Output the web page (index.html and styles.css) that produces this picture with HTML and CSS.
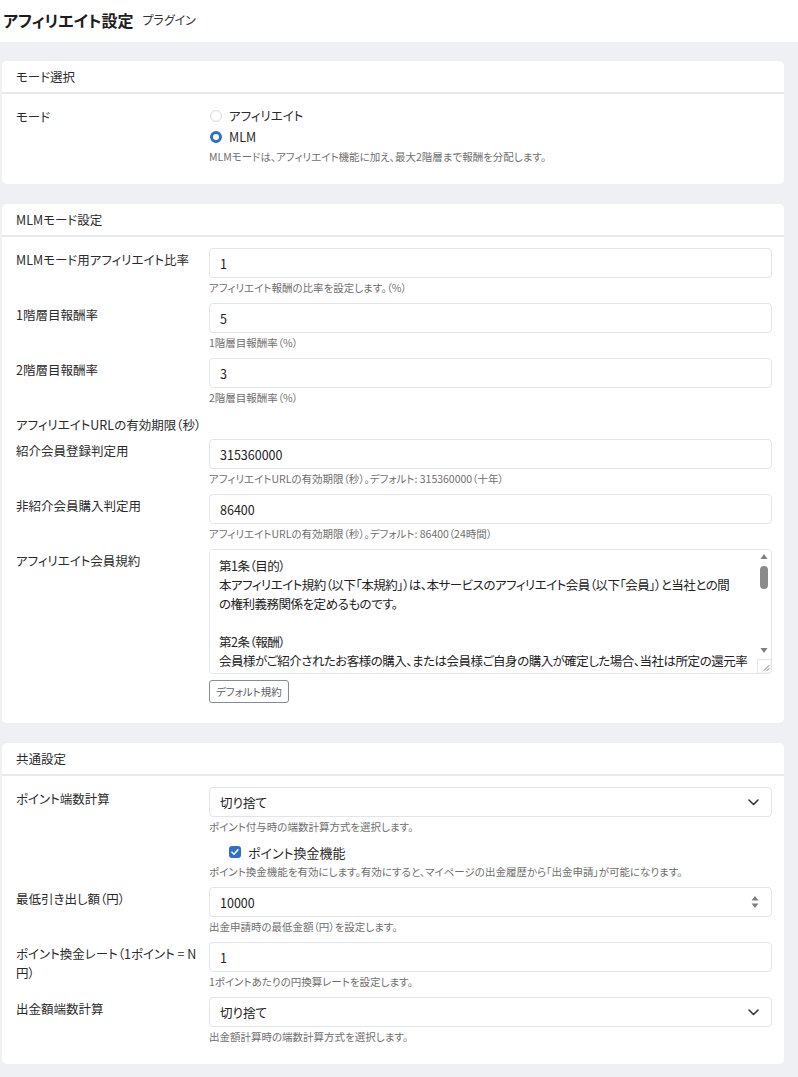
FILE: index.html
```html
<!DOCTYPE html>
<html lang="ja">
<head>
    <meta charset="UTF-8">
    <meta name="viewport" content="width=device-width, initial-scale=1.0">
    <title>アフィリエイト設定</title>
    <link rel="stylesheet" href="styles.css">
</head>
<body>
    <header class="page-header">
        <h1 class="page-title">アフィリエイト設定</h1>
        <span class="page-sub">プラグイン</span>
    </header>

    <main class="page-body">
        <section class="card">
            <div class="card-header">モード選択</div>
            <div class="card-body">
                <div class="form-row">
                    <label class="form-label">モード</label>
                    <div class="form-field">
                        <label class="radio"><input type="radio" name="mode" value="affiliate">アフィリエイト</label>
                        <label class="radio"><input type="radio" name="mode" value="mlm" checked>MLM</label>
                        <div class="help">MLMモードは、アフィリエイト機能に加え、最大2階層まで報酬を分配します。</div>
                    </div>
                </div>
            </div>
        </section>

        <section class="card">
            <div class="card-header">MLMモード設定</div>
            <div class="card-body">
                <div class="form-row">
                    <label class="form-label">MLMモード用アフィリエイト比率</label>
                    <div class="form-field">
                        <input type="text" class="input" value="1">
                        <div class="help">アフィリエイト報酬の比率を設定します。（%）</div>
                    </div>
                </div>
                <div class="form-row">
                    <label class="form-label">1階層目報酬率</label>
                    <div class="form-field">
                        <input type="text" class="input" value="5">
                        <div class="help">1階層目報酬率（%）</div>
                    </div>
                </div>
                <div class="form-row">
                    <label class="form-label">2階層目報酬率</label>
                    <div class="form-field">
                        <input type="text" class="input" value="3">
                        <div class="help">2階層目報酬率（%）</div>
                    </div>
                </div>
                <div class="form-row group-title">
                    <label class="form-label">アフィリエイトURLの有効期限（秒）</label>
                </div>
                <div class="form-row">
                    <label class="form-label">紹介会員登録判定用</label>
                    <div class="form-field">
                        <input type="text" class="input" value="315360000">
                        <div class="help">アフィリエイトURLの有効期限（秒）。デフォルト: 315360000（十年）</div>
                    </div>
                </div>
                <div class="form-row">
                    <label class="form-label">非紹介会員購入判定用</label>
                    <div class="form-field">
                        <input type="text" class="input" value="86400">
                        <div class="help">アフィリエイトURLの有効期限（秒）。デフォルト: 86400（24時間）</div>
                    </div>
                </div>
                <div class="form-row">
                    <label class="form-label">アフィリエイト会員規約</label>
                    <div class="form-field">
                        <div class="terms-wrap">
                            <textarea class="terms">第1条（目的）
本アフィリエイト規約（以下「本規約」）は、本サービスのアフィリエイト会員（以下「会員」）と当社との間
の権利義務関係を定めるものです。

第2条（報酬）
会員様がご紹介されたお客様の購入、または会員様ご自身の購入が確定した場合、当社は所定の還元率
に基づきポイントを付与いたします。

第3条（ポイントの換金）
会員は、当社が定める最低引き出し額以上のポイントを保有している場合、マイページより出金申請を行うことができます。

第4条（禁止事項）
会員は、虚偽の情報による登録、自己購入を目的とした不正な紹介、その他当社が不適切と判断する行為を行ってはなりません。

第5条（資格の取消）
会員が本規約に違反した場合、当社は事前の通知なく会員資格を取り消し、付与済みのポイントを失効させることができます。

第6条（規約の変更）
当社は、必要に応じて本規約を変更できるものとし、変更後の規約は本サービス上に掲示した時点から効力を生じます。</textarea>
                            <svg class="terms-scroll" width="14" height="123" viewBox="0 0 14 123">
                                <path d="M7 4l3.5 5h-7z" fill="#7f7f7f"/>
                                <rect x="3" y="16" width="8" height="23" rx="4" fill="#8b8b8b"/>
                                <path d="M3.5 98h7L7 103z" fill="#7f7f7f"/>
                                <rect x="0.5" y="109.5" width="13.5" height="13.5" fill="#fff" stroke="#e6e6e6"/>
                                <path d="M12 115.5l-5 5M12 118.5l-2 2" stroke="#6f6f6f" stroke-width="1" stroke-linecap="round"/>
                            </svg>
                        </div>
                        <button type="button" class="btn-outline">デフォルト規約</button>
                    </div>
                </div>
            </div>
        </section>

        <section class="card">
            <div class="card-header">共通設定</div>
            <div class="card-body">
                <div class="form-row">
                    <label class="form-label">ポイント端数計算</label>
                    <div class="form-field">
                        <div class="select-wrap">
                            <select class="input select">
                                <option selected>切り捨て</option>
                                <option>切り上げ</option>
                                <option>四捨五入</option>
                            </select>
                            <svg class="select-arrow" width="11" height="7" viewBox="0 0 11 7"><path d="M1 1l4.5 4.5L10 1" fill="none" stroke="#343a40" stroke-width="1.6" stroke-linecap="round" stroke-linejoin="round"/></svg>
                        </div>
                        <div class="help">ポイント付与時の端数計算方式を選択します。</div>
                    </div>
                </div>
                <div class="form-row">
                    <div></div>
                    <div class="form-field">
                        <label class="check">
                            <input type="checkbox" checked>
                            <svg class="check-mark" width="12" height="12" viewBox="0 0 12 12"><path d="M3 6.2l2 2 4-4.4" fill="none" stroke="#fff" stroke-width="1.6" stroke-linecap="round" stroke-linejoin="round"/></svg>
                            ポイント換金機能
                        </label>
                        <div class="help">ポイント換金機能を有効にします。有効にすると、マイページの出金履歴から「出金申請」が可能になります。</div>
                    </div>
                </div>
                <div class="form-row">
                    <label class="form-label">最低引き出し額（円）</label>
                    <div class="form-field">
                        <div class="select-wrap">
                            <input type="number" class="input number" value="10000">
                            <svg class="spin" width="10" height="16" viewBox="0 0 10 16"><path d="M5 2L8.5 6.5h-7z" fill="#7d7d7d"/><path d="M5 14L8.5 9.5h-7z" fill="#7d7d7d"/></svg>
                        </div>
                        <div class="help">出金申請時の最低金額（円）を設定します。</div>
                    </div>
                </div>
                <div class="form-row">
                    <label class="form-label">ポイント換金レート（1ポイント = N円）</label>
                    <div class="form-field">
                        <input type="text" class="input" value="1">
                        <div class="help">1ポイントあたりの円換算レートを設定します。</div>
                    </div>
                </div>
                <div class="form-row">
                    <label class="form-label">出金額端数計算</label>
                    <div class="form-field">
                        <div class="select-wrap">
                            <select class="input select">
                                <option selected>切り捨て</option>
                                <option>切り上げ</option>
                                <option>四捨五入</option>
                            </select>
                            <svg class="select-arrow" width="11" height="7" viewBox="0 0 11 7"><path d="M1 1l4.5 4.5L10 1" fill="none" stroke="#343a40" stroke-width="1.6" stroke-linecap="round" stroke-linejoin="round"/></svg>
                        </div>
                        <div class="help">出金額計算時の端数計算方式を選択します。</div>
                    </div>
                </div>
            </div>
        </section>
    </main>
</body>
</html>
```

FILE: styles.css
```css
* {
    box-sizing: border-box;
}

body {
    margin: 0;
    background: #eef0f4;
    color: #2b2b2b;
    font-family: "Noto Sans CJK JP", sans-serif;
    font-feature-settings: "palt";
    font-size: 12.5px;
}

.page-header {
    display: flex;
    align-items: center;
    gap: 9px;
    height: 42px;
    padding: 0 3px 3px;
    background: #fff;
}

.page-title {
    margin: 0;
    font-size: 16px;
    font-weight: 700;
    color: #1d1d1d;
}

.page-sub {
    font-size: 12px;
    color: #333;
}

.page-body {
    padding: 19px 14px 11px 2px;
}

.card {
    margin-bottom: 20px;
    background: #fff;
    border-radius: 5px;
}

.card:last-child {
    margin-bottom: 0;
}

.card-header {
    height: 33px;
    padding: 0 14px;
    line-height: 31px;
    border-bottom: 2px solid #e8e9ec;
}

.card-body {
    padding: 11px 12px 12px 14px;
}

.form-row {
    display: grid;
    grid-template-columns: 193px 1fr;
}

.form-label {
    padding: 2px 8px 0 0;
    line-height: 19px;
}

.group-title {
    margin-bottom: 5px;
}

.group-title .form-label {
    grid-column: 1 / -1;
}

.input {
    display: block;
    width: 100%;
    height: 30px;
    padding: 0 10px;
    border: 1px solid #e2e4e8;
    border-radius: 4px;
    background: #fff;
    color: #222;
    font: inherit;
}

.help {
    margin: 3px 0 8px;
    font-size: 10.5px;
    line-height: 14px;
    color: #6f6f6f;
}

/* radio / checkbox */
.radio {
    display: flex;
    align-items: center;
    gap: 7px;
    height: 21px;
    padding-left: 1px;
}

.radio input {
    appearance: none;
    width: 12px;
    height: 12px;
    margin: 0;
    border: 1px solid #d5d8dc;
    border-radius: 50%;
    background: #fff;
}

.radio input:checked {
    border: 3.5px solid #2f6fc6;
}

.check {
    position: relative;
    display: flex;
    align-items: center;
    gap: 7px;
    height: 20px;
    padding-left: 20px;
    font-size: 13px;
}

.check input {
    appearance: none;
    width: 12px;
    height: 12px;
    margin: 0;
    border-radius: 3px;
    background: #2f6fc6;
}

.check-mark {
    position: absolute;
    left: 20px;
    top: 4px;
}

/* select / number */
.select-wrap {
    position: relative;
}

.select {
    appearance: none;
}

.select-arrow {
    position: absolute;
    right: 13px;
    top: 12px;
    pointer-events: none;
}

.number {
    appearance: textfield;
}

.number::-webkit-inner-spin-button,
.number::-webkit-outer-spin-button {
    -webkit-appearance: none;
    margin: 0;
}

.spin {
    position: absolute;
    right: 12px;
    top: 7px;
    pointer-events: none;
}

/* terms */
.terms-wrap {
    position: relative;
}

.terms {
    display: block;
    width: 100%;
    height: 125px;
    padding: 6px 23px 6px 9px;
    border: 1px solid #e2e4e8;
    border-radius: 4px;
    color: #222;
    font: inherit;
    font-size: 12.5px;
    letter-spacing: -0.5px;
    line-height: 19px;
    resize: none;
}

.terms-scroll {
    position: absolute;
    top: 1px;
    right: 1px;
    pointer-events: none;
}

.btn-outline {
    display: block;
    height: 23px;
    margin: 6px 0 8px;
    padding: 0 6px;
    border: 1px solid #848c96;
    border-radius: 3px;
    background: #fff;
    color: #5a6169;
    font: inherit;
    font-size: 10.5px;
}
```
